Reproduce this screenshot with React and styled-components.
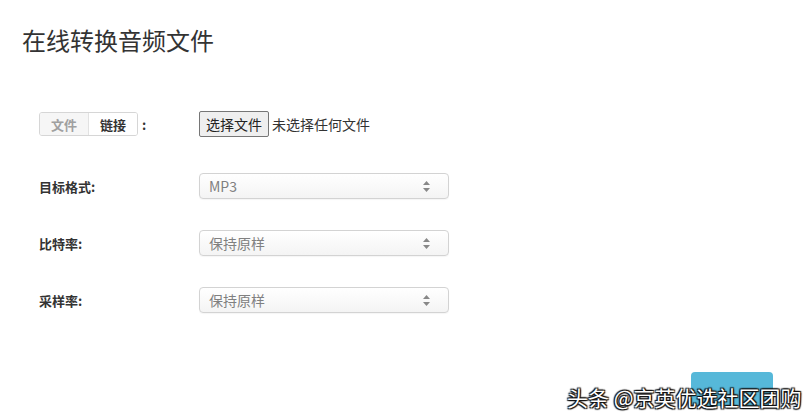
import styled, { createGlobalStyle } from "styled-components";

const GlobalStyle = createGlobalStyle`
  html, body {
    margin: 0;
    padding: 0;
    background: #fff;
    font-family: "Noto Sans CJK SC", "Noto Sans", sans-serif;
    color: #333;
  }
`;

const Page = styled.div`
  position: relative;
  width: 811px;
  height: 418px;
  overflow: hidden;
  padding: 23px 0 0 22px;
  box-sizing: border-box;
`;

const Title = styled.h1`
  margin: 0;
  font-size: 24px;
  line-height: 34px;
  font-weight: 400;
  color: #333;
`;

const Form = styled.div`
  display: flex;
  flex-direction: column;
  gap: 31px;
  margin-top: 51px;
  padding-left: 17px;
`;

const Row = styled.div`
  display: grid;
  grid-template-columns: 160px 250px;
  align-items: center;
  height: ${(p) => p.$h || 26}px;
  margin-bottom: ${(p) => p.$after || 0}px;
`;

const Label = styled.div`
  font-size: 13px;
  font-weight: 700;
  color: #333;
  display: flex;
  align-items: center;
`;

const Tabs = styled.div`
  display: inline-flex;
  border: 1px solid #d6d6d6;
  border-radius: 3px;
  overflow: hidden;
  height: 22px;
`;

const Tab = styled.span`
  width: 48px;
  display: flex;
  align-items: center;
  justify-content: center;
  font-size: 13px;
  font-weight: 700;
  color: ${(p) => (p.$active ? "#333" : "#a0a0a0")};
  background: ${(p) => (p.$active ? "#fff" : "#f6f6f6")};
  border-left: ${(p) => (p.$active ? "1px solid #e2e2e2" : "none")};
`;

const Colon = styled.span`
  margin-left: 4px;
  font-weight: 700;
`;

const FileField = styled.div`
  display: flex;
  align-items: center;
  gap: 3px;
  font-size: 14px;
  color: #333;
`;

const FileButton = styled.button`
  height: 26px;
  padding: 0 6px;
  font-family: inherit;
  font-size: 14px;
  color: #222;
  background: #efefef;
  border: 1px solid #767676;
  border-radius: 2px;
`;

const Select = styled.div`
  width: 250px;
  height: 26px;
  box-sizing: border-box;
  display: flex;
  align-items: center;
  justify-content: space-between;
  padding: 0 18px 0 9px;
  border: 1px solid #d3d3d3;
  border-radius: 4px;
  background: linear-gradient(#ffffff, #f4f4f4);
  box-shadow: 0 1px 1px rgba(0, 0, 0, 0.04);
  font-size: 14px;
  color: #808080;
`;

const Footer = styled.div`
  display: flex;
  justify-content: flex-end;
  padding-right: 38px;
  margin-top: 59px;
`;

const SubmitButton = styled.div`
  width: 82px;
  height: 34px;
  border-radius: 4px;
  background: #56b8d9;
`;

const Watermark = styled.div`
  position: absolute;
  left: 567px;
  top: 383px;
  font-size: 21px;
  line-height: 28px;
  color: #fff;
  white-space: nowrap;
  text-shadow: 1px 1px 1px #111, -1px -1px 1px #111, 1px -1px 1px #111, -1px 1px 1px #111, 0 0 2px #000;
`;

function Arrows() {
  return (
    <svg width="7" height="11" viewBox="0 0 7 11">
      <path d="M3.5 0 L7 4 H0 Z" fill="#888" />
      <path d="M3.5 11 L7 7 H0 Z" fill="#888" />
    </svg>
  );
}

function SelectField({ value }) {
  return (
    <Select>
      <span>{value}</span>
      <Arrows />
    </Select>
  );
}

export default function App() {
  return (
    <Page>
      <GlobalStyle />
      <Title>在线转换音频文件</Title>
      <Form>
        <Row $h={32} $after={2}>
          <Label>
            <Tabs>
              <Tab>文件</Tab>
              <Tab $active>链接</Tab>
            </Tabs>
            <Colon>:</Colon>
          </Label>
          <FileField>
            <FileButton>选择文件</FileButton>
            <span>未选择任何文件</span>
          </FileField>
        </Row>
        <Row>
          <Label>目标格式:</Label>
          <SelectField value="MP3" />
        </Row>
        <Row>
          <Label>比特率:</Label>
          <SelectField value="保持原样" />
        </Row>
        <Row>
          <Label>采样率:</Label>
          <SelectField value="保持原样" />
        </Row>
      </Form>
      <Footer>
        <SubmitButton />
      </Footer>
      <Watermark>头条 @京英优选社区团购</Watermark>
    </Page>
  );
}
